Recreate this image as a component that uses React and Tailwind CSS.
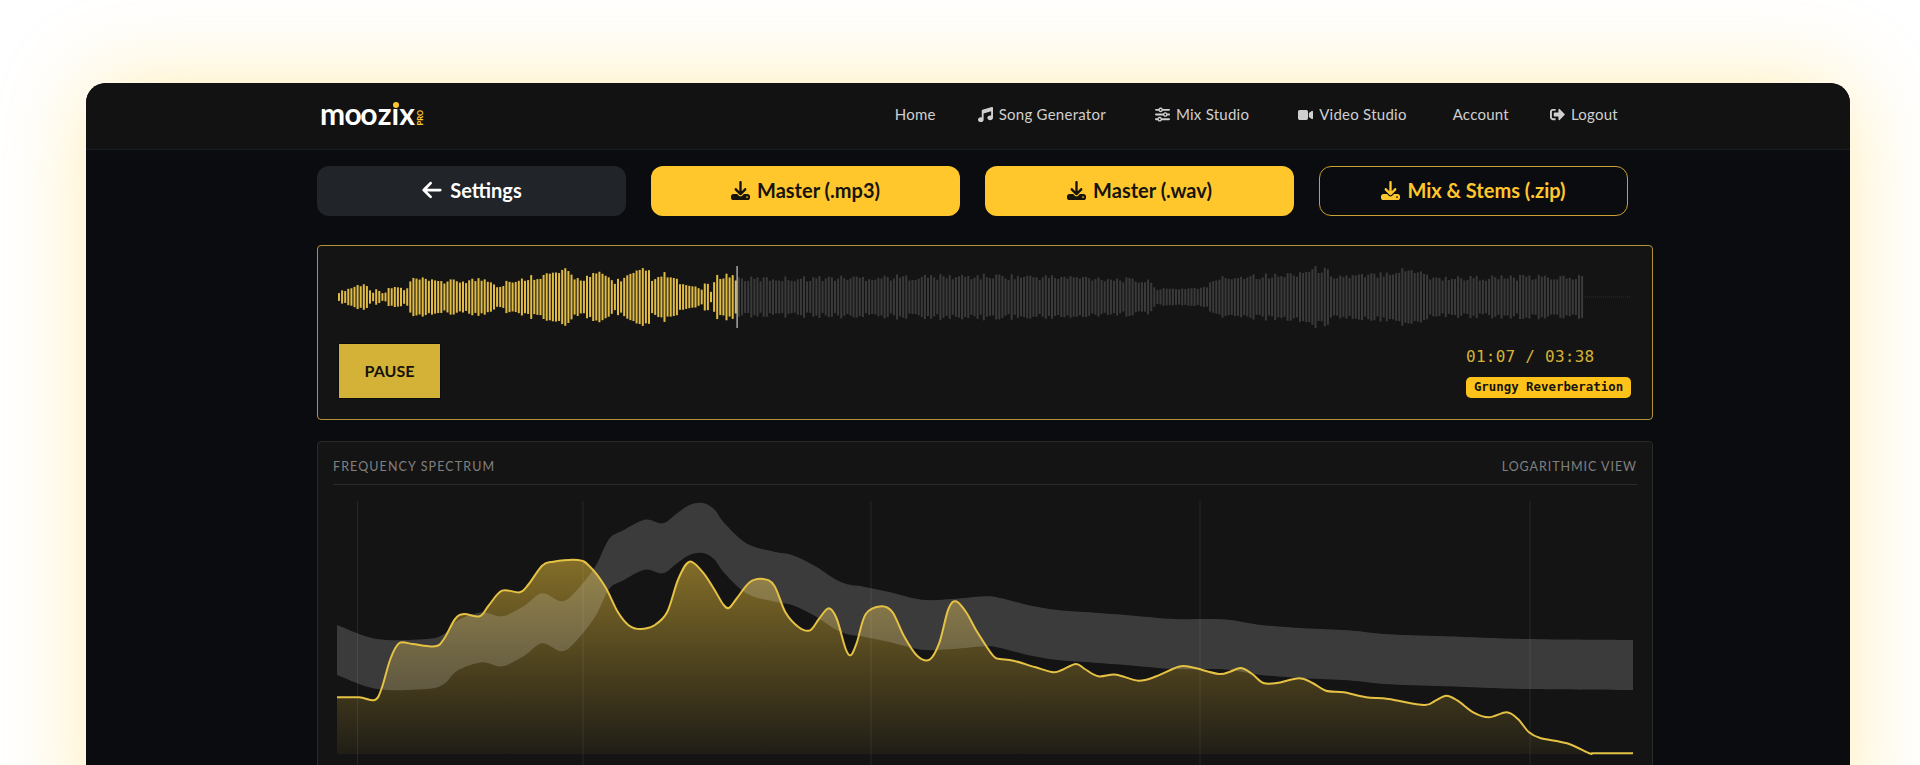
import React from "react";
import { FaArrowLeft, FaDownload, FaMusic, FaSliders, FaVideo } from "react-icons/fa6";
import { FaSignOutAlt } from "react-icons/fa";

const band = [[60,588],[150,630],[260,630],[300,615],[330,575],[385,550],[430,562],[480,530],[520,493],[565,517],[600,480],[640,410],[670,330],[700,305],[750,272],[790,283],[820,255],[850,228],[880,222],[905,240],[930,285],[980,345],[1040,368],[1080,378],[1130,410],[1190,460],[1240,473],[1300,490],[1370,512],[1440,510],[1510,502]].map(([x,y])=>[310+x/2.24,430+y/3])
  .concat([[0,507],[70,530],[130,543],[200,550],[300,560],[390,570],[500,571],[580,587],[680,598],[780,604],[860,615],[1000,622],[1180,630],[1418,633]].map(([x,y])=>[1000+x/2.24,430+y/3]));

const line = [[60,805],[110,805],[145,813],[160,780],[180,690],[200,642],[230,645],[280,652],[300,630],[325,570],[345,555],[380,562],[400,530],[430,485],[470,490],[490,465],[520,410],[545,398],[600,393],[625,410],[660,470],[690,550],[715,590],[740,600],[770,590],[800,550],[825,450],[850,398],[880,430],[905,480],[925,525],[938,537],[955,510],[985,460],[1015,450],[1040,470],[1065,550],[1095,595],[1120,604],[1140,570],[1162,538],[1180,570],[1200,660],[1212,678],[1225,640],[1245,555],[1280,532],[1305,550],[1330,620],[1360,680],[1388,692],[1410,640],[1430,540],[1447,517],[1470,550],[1495,610],[1530,680]].map(([x,y])=>[310+x/2.24,430+y/3])
  .concat([[0,690],[30,695],[80,715],[120,730],[140,722],[170,705],[190,720],[220,742],[260,737],[310,755],[350,742],[400,713],[430,715],[490,735],[515,728],[540,717],[565,735],[590,762],[620,762],[670,748],[700,762],[730,785],[770,790],[820,805],[870,810],[950,828],[975,815],[1000,800],[1025,815],[1060,850],[1095,865],[1135,850],[1160,870],[1185,910],[1210,927],[1270,943],[1320,973],[1326,973],[1340,973],[1418,973]].map(([x,y])=>[1000+x/2.24,430+y/3]));

const f = (n) => n.toFixed(1);
function smooth(pts) {
  let d = `M${f(pts[0][0])} ${f(pts[0][1])}`;
  for (let i = 0; i < pts.length - 1; i++) {
    const p0 = pts[Math.max(i - 1, 0)], p1 = pts[i], p2 = pts[i + 1], p3 = pts[Math.min(i + 2, pts.length - 1)];
    d += `C${f(p1[0] + (p2[0] - p0[0]) / 6)} ${f(p1[1] + (p2[1] - p0[1]) / 6)} ${f(p2[0] - (p3[0] - p1[0]) / 6)} ${f(p2[1] - (p3[1] - p1[1]) / 6)} ${f(p2[0])} ${f(p2[1])}`;
  }
  return d;
}
const bandBottom = band.map(([x, y]) => [x, y + 50]).reverse();
const bandPath = smooth(band) + "L" + f(bandBottom[0][0]) + " " + f(bandBottom[0][1]) + smooth(bandBottom).replace(/^M[^C]*/, "") + "Z";
const linePath = smooth(line);
const fillPath = linePath + "L1633 755L337 755Z";

const env = [[338,5],[343,7],[351,10],[358,13],[365,13],[372,5],[377,9],[383,3],[388,9],[397,11],[405,6],[410,18],[417,19],[433,16],[438,19],[443,16],[460,17],[483,19],[490,18],[495,12],[503,12],[507,20],[513,14],[527,21],[543,23],[553,25],[565,27],[577,19],[597,24],[603,24],[613,16],[627,22],[647,29],[653,16],[663,24],[673,19],[687,10],[693,12],[700,8],[705,16],[710,6],[715,20],[723,24],[737,20],[745,19],[900,21],[1000,22],[1100,20],[1127,18],[1150,16],[1157,8],[1206,10],[1213,19],[1250,23],[1280,22],[1307,28],[1320,30],[1335,22],[1367,22],[1387,27],[1420,29],[1430,20],[1583,21]];
function amp(x) {
  for (let i = 0; i < env.length - 1; i++) {
    if (x <= env[i + 1][0]) {
      const t = (x - env[i][0]) / (env[i + 1][0] - env[i][0]);
      return env[i][1] + (env[i + 1][1] - env[i][1]) * t;
    }
  }
  return 20;
}
const bars = Array.from({ length: 402 }, (_, i) => {
  const x = 338 + i * 3.1;
  const r = Math.abs(Math.sin(i * 12.9898) * 43758.5453) % 1;
  const h = amp(x) * (0.78 + r * 0.3);
  return { x, h, played: x < 737 };
});

function NavLink({ icon, children, className }) {
  return (
    <a className={"flex items-center gap-[6px] " + className}>
      {icon}
      <span>{children}</span>
    </a>
  );
}

function DlButton({ children, outline }) {
  return (
    <button className={"flex h-[50px] w-[309px] items-center justify-center gap-[7px] rounded-xl pb-[2px] text-[20px] font-bold " + (outline ? "border border-[#c9a032] text-[#ffc72c]" : "bg-[#ffc72c] text-[#16140d]")}>
      <FaDownload className="h-[19px] w-[19px]" />
      {children}
    </button>
  );
}

export default function App() {
  return (
    <div className="h-[765px] overflow-hidden bg-white pl-[86px] pt-[83px] font-['Lato',sans-serif]">
      <div className="h-[760px] w-[1764px] overflow-hidden rounded-t-[20px] bg-[#0a0c10] shadow-[0_0_90px_rgba(255,193,7,0.3)]">
        <header className="flex h-[67px] items-center justify-between border-b border-[#181d28] bg-[#121212] pl-[234px] pr-[232px]">
          <div className="relative flex h-[40px] w-[102px] items-center pb-[7px]">
            <span className="text-[30px] font-bold leading-none text-white">
              <span className="tracking-[-0.6px]">m</span><span className="tracking-[-1.6px]">oo</span><span className="ml-[2px]">z</span><span className="relative">ı<span className="absolute left-[1px] top-[7px] h-[6px] w-[6px] rounded-full bg-[#ffc72c]" /></span>x
            </span>
            <span className="absolute left-[93px] top-[18px] origin-center -rotate-90 text-[7.5px] font-black leading-none text-[#ffc72c]">PRO</span>
          </div>
          <nav className="flex items-center pb-[3px] text-[15px] tracking-[0.25px] text-[#cfcfcf]">
            <NavLink>Home</NavLink>
            <NavLink className="ml-[42px]" icon={<FaMusic className="h-[15px] w-[15px]" />}>Song Generator</NavLink>
            <NavLink className="ml-[49px]" icon={<FaSliders className="h-[15px] w-[15px]" />}>Mix Studio</NavLink>
            <NavLink className="ml-[49px]" icon={<FaVideo className="h-[14px] w-[15px]" />}>Video Studio</NavLink>
            <NavLink className="ml-[46px]">Account</NavLink>
            <NavLink className="ml-[41px]" icon={<FaSignOutAlt className="h-[15px] w-[15px]" />}>Logout</NavLink>
          </nav>
        </header>

        <main className="ml-[231px] w-[1336px] pt-[16px]">
          <div className="flex gap-[25px]">
            <button className="flex h-[50px] w-[309px] items-center justify-center gap-[7px] rounded-xl bg-[#212529] pb-[2px] text-[20px] font-bold text-white">
              <FaArrowLeft className="h-[22px] w-[22px]" />
              Settings
            </button>
            <DlButton>Master (.mp3)</DlButton>
            <DlButton>Master (.wav)</DlButton>
            <DlButton outline>Mix &amp; Stems (.zip)</DlButton>
          </div>

          <section className="mt-[29px] h-[175px] rounded-[4px] border border-[#b3933a] bg-[#141414] px-[20px] pt-[20px]">
            <svg className="block h-[62px] w-[1294px]" viewBox="338 266 1294 62" fill="none">
              {bars.map((b, i) => (
                <rect key={i} x={b.x} y={297 - b.h} width={2} height={b.h * 2} fill={b.played ? "#e0bb45" : "#3a3a3a"} />
              ))}
              <line x1="1585" y1="297" x2="1630" y2="297" stroke="#2c2c2c" strokeDasharray="1 1" />
              <rect x="736.5" y="266" width="1.2" height="62" fill="#c9c9c9" />
            </svg>
            <div className="mt-[15px] flex items-start justify-between">
              <button className="h-[56px] w-[103px] border border-[#0c0c0c] bg-[#d4b237] text-[16px] font-bold text-[#141208]">PAUSE</button>
              <div className="flex flex-col items-start pr-[1px] font-['DejaVu_Sans_Mono',monospace]">
                <span className="mt-[4px] text-[16px] leading-[20px] tracking-[0.25px] text-[#d4b237]">01:07 / 03:38</span>
                <span className="mt-[10px] flex h-[21px] w-[165px] items-center justify-center rounded-[5px] bg-[#ffc21a] text-[12.4px] font-bold text-[#15130b]">Grungy Reverberation</span>
              </div>
            </div>
          </section>

          <section className="mt-[21px] h-[400px] rounded-[4px] border border-[#2a2a2a] bg-[#141414] px-[15px]">
            <div className="flex h-[43px] items-center justify-between border-b border-[#2b2b2b] pt-[8px] text-[12.5px] tracking-[1.1px] text-[#808080]">
              <span>FREQUENCY SPECTRUM</span>
              <span className="tracking-[0.95px]">LOGARITHMIC VIEW</span>
            </div>
            <svg className="ml-[4px] mt-[16px] block h-[270px] w-[1296px]" viewBox="337 502 1296 270" fill="none">
              <defs>
                <linearGradient id="gold" gradientUnits="userSpaceOnUse" x1="0" y1="560" x2="0" y2="755">
                  <stop offset="0" stopColor="#d4af37" stopOpacity="0.58" />
                  <stop offset="1" stopColor="#d4af37" stopOpacity="0.06" />
                </linearGradient>
              </defs>
              <path d={fillPath} fill="url(#gold)" />
              <path d={bandPath} fill="#ffffff" fillOpacity="0.17" />
              {[357.5, 583, 871, 1200, 1530].map((x) => (
                <line key={x} x1={x} y1="502" x2={x} y2="772" stroke="#ffffff" strokeOpacity="0.08" />
              ))}
              <path d={linePath} stroke="#e6c244" strokeWidth="2" />
            </svg>
          </section>
        </main>
      </div>
    </div>
  );
}
